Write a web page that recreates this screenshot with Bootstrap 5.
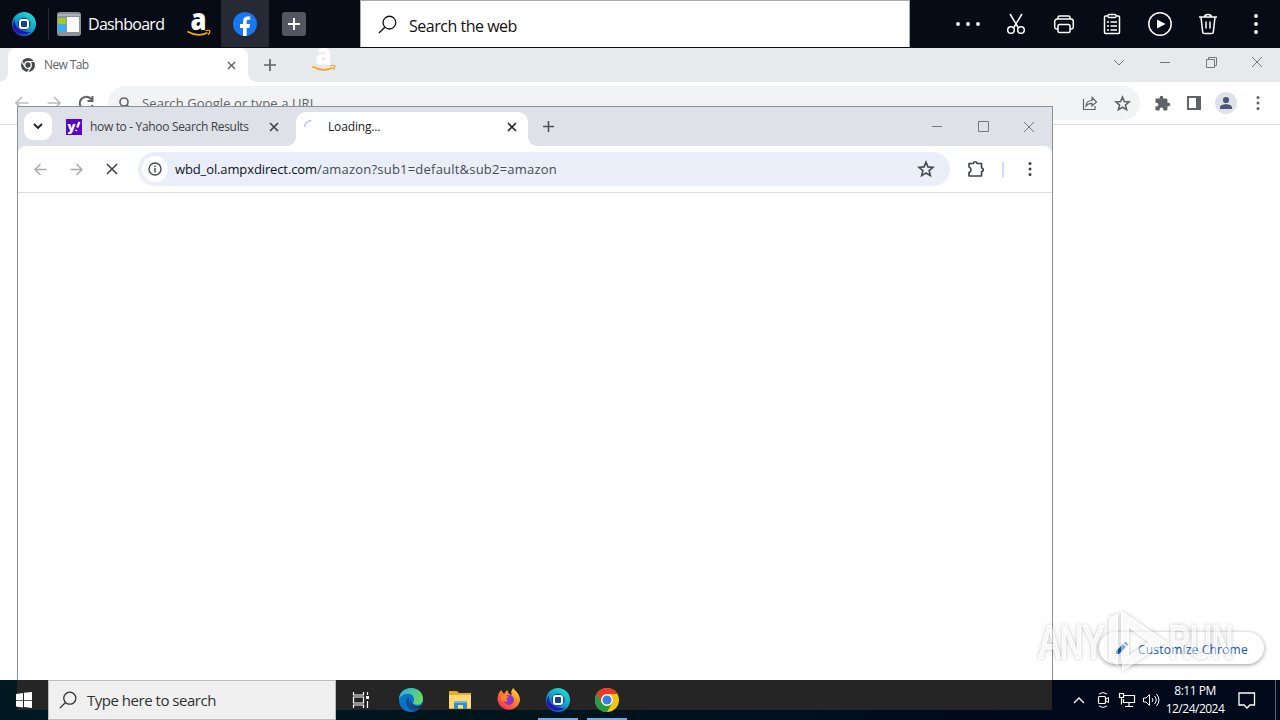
<!DOCTYPE html>
<html lang="en">
<head>
    <meta charset="UTF-8">
    <meta name="viewport" content="width=device-width, initial-scale=1.0">
    <title>Desktop</title>
    <link href="https://cdn.jsdelivr.net/npm/bootstrap@5.3.0/dist/css/bootstrap.min.css" rel="stylesheet">
    <style>
        body { width: 1280px; height: 720px; overflow: hidden; font-family: "Open Sans", "Noto Sans", sans-serif; font-size: 12px; line-height: 16px; color: #202124; background: #fff; }
        svg { display: block; flex: none; overflow: visible; }
        .ln { fill: none; stroke: currentColor; }
        .cell { display: flex; align-items: center; justify-content: center; flex: none; }

        /* launcher bar */
        .launcher { height: 48px; background: #070b16; color: #fff; }
        .launcher .cell { width: 48px; height: 47px; }
        .launcher .divider { width: 1px; height: 32px; background: #252a34; }
        .launcher .dash { width: 124px; padding-left: 8px; font-size: 16px; }
        .dash span { margin: 1px 0 0 7px; letter-spacing: -.7px; }
        .launcher .active-cell { background: #252a34; }
        .launcher .addcell { padding-left: 2px; }
        .websearch { width: 550px; height: 47px; margin: 0 34px 0 43px; padding-left: 17px; background: #fff; color: #111; border: 1px solid #aaa9b0; border-bottom: 0; font-size: 16px; }
        .websearch span { margin: 3px 0 0 12px; letter-spacing: -.48px; }

        /* back browser */
        .strip { height: 34px; background: #e7eaed; padding-left: 8px; color: #5f6368; }
        .back-tab { position: relative; width: 240px; height: 34px; background: #fff; border-radius: 8px 8px 0 0; padding: 0 8px 0 12px; }
        .back-tab span { margin-left: 8px; letter-spacing: -.6px; }
        .back-tools { height: 43px; border-bottom: 1px solid #dadce0; color: #5f6368; padding: 4px 6px 0; }
        .back-tools .cell { width: 32px; height: 34px; }
        .back-tools .puzzle { margin-left: 6px; }
        .back-omni { width: 1032px; height: 34px; margin-left: 6px; border-radius: 17px; background: #f1f3f4; padding-left: 10px; padding-right: 2px; font-size: 13px; }
        .back-omni span { margin-left: 10px; letter-spacing: .1px; }
        .wincell { width: 46px; height: 28px; color: #74777c; }

        /* front browser */
        .front { position: absolute; left: 17px; top: 106px; width: 1036px; height: 574px; background: linear-gradient(#dee1e8, #dee1e8) 0 0 / 100% 50px no-repeat #fff; border: 1px solid #8a8f98; border-bottom: 0; }
        .front-strip { height: 39px; }
        .tabmenu { width: 28px; height: 28px; margin: 5px 0 0 6px; border-radius: 9px; background: #fff; }
        .front-tab { height: 39px; color: #3c4043; }
        .idle-tab { width: 226px; margin-left: 4px; padding: 0 3px 0 10px; }
        .idle-tab span { margin-left: 8px; letter-spacing: -.33px; }
        .live-tab { position: relative; width: 232px; height: 34px; margin-top: 5px; padding: 0 11px 5px 7px; background: #fff; border-radius: 10px 10px 0 0; color: #202124; }
        .live-tab span { margin-left: 10px; letter-spacing: -.15px; }
        .foot { position: absolute; bottom: 0; width: 9px; height: 9px; }
        .foot-l { left: -9px; background: radial-gradient(circle at 0 0, transparent 8.5px, #fff 9px); }
        .foot-r { right: -9px; background: radial-gradient(circle at 100% 0, transparent 8.5px, #fff 9px); }
        .front-tools { height: 47px; border-radius: 8px 8px 0 0; background: #fff; border-bottom: 1px solid #dadce0; padding: 0 4px; color: #3c4043; }
        .front-page { height: 487px; background: #fff; }
        .front-tools .cell { width: 36px; height: 36px; }
        .front-omni { width: 812px; height: 34px; margin-left: 8px; border-radius: 17px; background: #e9eef9; padding: 0 6px 0 4px; font-size: 13px; color: #474b54; }
        .front-omni .info { width: 26px; height: 26px; border-radius: 50%; background: #fff; }
        .front-omni span { margin-left: 7px; letter-spacing: .21px; }
        .front-omni b { font-weight: 400; color: #111318; letter-spacing: -.12px; }

        /* over the pages */
        .ghost { position: absolute; left: 312px; top: 46px; }
        .customize { position: absolute; left: 1099px; top: 632px; width: 165px; height: 32px; border-radius: 16px; background: #fff; box-shadow: 0 1px 4px rgba(0,0,0,.4); color: #1558b3; padding-left: 15px; }
        .customize span { margin: 3px 0 0 8px; letter-spacing: .2px; }
        .watermark { position: absolute; left: 1031px; top: 601px; }

        /* taskbar */
        .taskbar { position: absolute; left: 0; top: 680px; width: 1280px; height: 40px; color: #fff; background: linear-gradient(#262525, #262525) 17px 0 / 1035px 30px no-repeat, linear-gradient(90deg, #001820, #00131d 55%, #000a1b 80%); }
        .typebox { width: 288px; height: 40px; background: #f0f0f0; border: 1px solid #bbb; color: #303030; padding-left: 10px; font-size: 15px; }
        .typebox span { margin-left: 10px; letter-spacing: -.48px; }
        .taskbar .cell { width: 49px; height: 40px; }
        .taskbar .running { background: linear-gradient(#76aae4, #76aae4) center bottom / 40px 2px no-repeat; }
        .taskbar .tray { width: 24px; }
        .clock { width: 64px; line-height: 18px; text-align: center; letter-spacing: -.5px; white-space: nowrap; }
        .peek { width: 1px; height: 40px; background: #59616c; margin: 0 4px 0 8px; }
    </style>
</head>
<body>
    <svg width="0" height="0" class="position-absolute">
        <defs>
            <linearGradient id="ringBlue" x1="0" y1="1" x2=".7" y2="0"><stop offset="0" stop-color="#1729cf"/><stop offset=".4" stop-color="#0888c4"/><stop offset="1" stop-color="#25d9d0"/></linearGradient>
            <linearGradient id="edgeTop" x1="0" x2="1" y2=".5"><stop offset="0" stop-color="#28a9df"/><stop offset="1" stop-color="#68d965"/></linearGradient>
            <linearGradient id="fire" x1="1" y1="0" x2=".2" y2="1"><stop offset="0" stop-color="#fff04b"/><stop offset=".45" stop-color="#ff8a27"/><stop offset="1" stop-color="#f52961"/></linearGradient>
            <symbol id="ring" viewBox="0 0 24 24"><circle cx="12" cy="12" r="12" fill="url(#ringBlue)"/><path d="M3 8c-1 8 7 13 16 12A12 12 0 0 1 1.500 17C0 13 1 10 3 8Z" fill="#2414b0"/><circle cx="12" cy="12" r="6.500" fill="#1a44a4"/><rect x="8" y="8" width="8" height="8" rx="2" fill="#1b4193" stroke="#fff" stroke-width="2"/></symbol>
            <symbol id="amazon" viewBox="0 0 24 26"><text x="3.500" y="19" font-family="Open Sans" font-weight="800" font-size="30" fill="#fff" textLength="16" lengthAdjust="spacingAndGlyphs">a</text><path d="M.5 20.500q10 6 20 1.200" fill="none" stroke="#f5a51d" stroke-width="1.800"/><path d="M18.500 19.700q4-.8 4.300 0q.2 1.800-1.600 4.200" fill="none" stroke="#f5a51d" stroke-width="1.300"/></symbol>
            <symbol id="close" viewBox="0 0 10 10"><path d="m1 1 8 8M9 1 1 9" class="ln" stroke-width="1.600"/></symbol>
            <symbol id="thinclose" viewBox="0 0 12 12"><path d="m1 1 10 10M11 1 1 11" class="ln"/></symbol>
            <symbol id="plus" viewBox="0 0 12 12"><path d="M6 0v12M0 6h12" class="ln" stroke-width="1.700"/></symbol>
            <symbol id="arrow" viewBox="0 0 14 14"><path d="M13.500 7H1M7 1 1 7l6 6" class="ln" stroke-width="1.600"/></symbol>
            <symbol id="star" viewBox="0 0 24 24"><path d="m12 3 2.600 6.200 6.700.6-5.100 4.400 1.600 6.600-5.800-3.500-5.800 3.500 1.600-6.600-5.100-4.400 6.700-.6Z" class="ln" stroke-width="2.200"/></symbol>
            <symbol id="dots" viewBox="0 0 4 16"><circle cx="2" cy="2.500" r="1.500" fill="currentColor"/><circle cx="2" cy="8" r="1.500" fill="currentColor"/><circle cx="2" cy="13.500" r="1.500" fill="currentColor"/></symbol>
            <symbol id="lens" viewBox="0 0 20 20"><circle cx="12" cy="8" r="6.700" class="ln" stroke-width="1.400"/><path d="m7.200 12.800-6.200 6.200" class="ln" stroke-width="1.400"/></symbol>
        </defs>
    </svg>

    <header class="launcher d-flex align-items-start">
        <div class="cell"><svg width="24" height="24"><use href="#ring"/></svg></div>
        <div class="divider mt-2"></div>
        <div class="cell dash justify-content-start">
            <svg width="24" height="24"><rect width="24" height="24" rx="3" fill="#8d9299"/><path d="M1 6h8v6H1z" fill="#a4c925"/><path d="M1 12h8v8H1z" fill="#39aeea"/><path d="M10 5h12v15H10z" fill="#fafafa"/><path d="M1 3h22" stroke="#aeb1b5" stroke-width="2"/></svg>
            <span>Dashboard</span>
        </div>
        <div class="cell ps-1"><svg width="24" height="26"><use href="#amazon"/></svg></div>
        <div class="cell active-cell"><svg width="24" height="24" viewBox="0 0 24 24"><circle cx="12" cy="12" r="12" fill="#1877f2"/><path d="M10 24v-8H7v-4h3V9.300C10 6 12 4.400 14.700 4.400l2.500.2v3.200h-1.600c-1.500 0-1.900.9-1.900 1.900V12H17l-.6 4h-2.700v8z" fill="#fff"/></svg></div>
        <div class="cell addcell"><svg width="24" height="24"><rect width="24" height="24" rx="3" fill="#53565e"/><path d="M12 6v12M6 12h12" stroke="#fff" stroke-width="2"/></svg></div>
        <div class="websearch d-flex align-items-center">
            <svg width="19" height="19"><use href="#lens"/></svg>
            <span>Search the web</span>
        </div>
        <div class="cell"><svg width="26" height="6"><circle cx="3" cy="3" r="1.900" fill="#fff"/><circle cx="13" cy="3" r="1.900" fill="#fff"/><circle cx="23" cy="3" r="1.900" fill="#fff"/></svg></div>
        <div class="cell"><svg width="24" height="24"><path d="m6 2 8.500 14M18 2 9.500 16" class="ln" stroke-width="1.500"/><circle cx="7" cy="18" r="3.300" class="ln" stroke-width="1.500"/><circle cx="17" cy="18" r="3.300" class="ln" stroke-width="1.500"/></svg></div>
        <div class="cell"><svg width="24" height="24"><path d="M6 17H4.500A2 2 0 0 1 2.700 15V9.500a2.500 2.500 0 0 1 2.500-2.500h13.600a2.500 2.500 0 0 1 2.500 2.500V15a2 2 0 0 1-1.800 2H18M6 7V5.500A1.500 1.500 0 0 1 7.500 4h9A1.500 1.500 0 0 1 18 5.500V7" class="ln" stroke-width="1.500"/><rect x="6" y="12.500" width="12" height="8" rx="1.500" class="ln" stroke-width="1.500"/></svg></div>
        <div class="cell"><svg width="24" height="24"><path d="M8 4H5.500A1 1 0 0 0 4.500 5v15.500a1 1 0 0 0 1 1h13a1 1 0 0 0 1-1V5a1 1 0 0 0-1-1H16" class="ln" stroke-width="1.500"/><rect x="8" y="2.500" width="8" height="3" rx="1" class="ln" stroke-width="1.300"/><path d="M7 10h2m1.500 0H17M7 14h2m1.500 0H17M7 18h2m1.500 0H17" class="ln" stroke-width="1.700"/></svg></div>
        <div class="cell"><svg width="24" height="24"><circle cx="12" cy="12" r="11.200" class="ln" stroke-width="1.500"/><path d="m9 7.500 8.500 4.500L9 16.500z" fill="#fff"/></svg></div>
        <div class="cell"><svg width="24" height="24"><path d="M3 5h18M8.500 5c.3-3.200 6.700-3.200 7 0M5 5l1.700 15.300a1.500 1.500 0 0 0 1.500 1.200h7.600a1.500 1.500 0 0 0 1.500-1.200L19 5M10 9.500v7M14 9.500v7" class="ln" stroke-width="1.500"/></svg></div>
        <div class="cell"><svg width="6" height="22"><circle cx="3" cy="3" r="1.900" fill="#fff"/><circle cx="3" cy="11" r="1.900" fill="#fff"/><circle cx="3" cy="19" r="1.900" fill="#fff"/></svg></div>
    </header>

    <section class="back-browser">
        <div class="strip d-flex">
            <div class="back-tab d-flex align-items-center">
                <svg width="16" height="16" viewBox="0 0 16 16"><circle cx="8" cy="8" r="7" fill="#46494d"/><circle cx="8" cy="8" r="3.300" fill="#46494d" stroke="#fff" stroke-width="1.300"/><path d="M8 4.500h7M5 9.700 1.500 4M11 9.700 7.500 15.500" stroke="#fff" stroke-width="1.200"/></svg>
                <span>New Tab</span>
                <svg class="ms-auto me-1" width="9" height="9"><use href="#close"/></svg>
                <i class="foot foot-r"></i><i class="foot foot-l"></i>
            </div>
            <div class="cell" style="width:44px"><svg width="12" height="12"><use href="#plus"/></svg></div>
            <div class="d-flex ms-auto">
                <div class="cell wincell"><svg width="12" height="7"><path d="m1 1 5 5 5-5" class="ln"/></svg></div>
                <div class="cell wincell"><svg width="10" height="1"><path d="M0 .5h10" class="ln"/></svg></div>
                <div class="cell wincell"><svg width="11" height="11"><path d="M.5 2.500h8v8h-8zM2.500 2.500v-2h8v8h-2" class="ln"/></svg></div>
                <div class="cell wincell"><svg width="12" height="12"><use href="#thinclose"/></svg></div>
            </div>
        </div>
        <div class="back-tools d-flex">
            <div class="cell"><svg width="14" height="14" style="color:#babcbe"><use href="#arrow"/></svg></div>
            <div class="cell"><svg width="14" height="14" style="color:#babcbe" transform="scale(-1 1)"><use href="#arrow"/></svg></div>
            <div class="cell"><svg width="16" height="16"><path d="M13.500 4.500A6.500 6.500 0 1 0 14.500 10M14.500 1v5h-5" class="ln" stroke-width="2"/></svg></div>
            <div class="back-omni d-flex align-items-center">
                <svg width="14" height="14"><circle cx="6" cy="6" r="4" class="ln" stroke-width="1.600"/><path d="m9 9 4 4" class="ln" stroke-width="1.600"/></svg>
                <span>Search Google or type a URL</span>
                <div class="cell ms-auto"><svg width="16" height="16"><path d="M1.500 4v10.500H13V11M4 11c.3-3.500 2.700-5.500 6-5.500V2.500L14.500 7 10 11V8.300C7.500 8.300 5.500 9 4 11Z" class="ln" stroke-width="1.200"/></svg></div>
                <div class="cell"><svg width="17" height="17"><use href="#star"/></svg></div>
            </div>
            <div class="cell puzzle"><svg width="17" height="17" viewBox="0 0 24 24"><path fill="currentColor" d="M20.500 11H19V7a2 2 0 0 0-2-2h-4V3.500a2.500 2.500 0 0 0-5 0V5H4a2 2 0 0 0-2 2v3.800h1.500a2.700 2.700 0 0 1 0 5.400H2V20a2 2 0 0 0 2 2h3.800v-1.500a2.700 2.700 0 0 1 5.400 0V22H17a2 2 0 0 0 2-2v-4h1.500a2.500 2.500 0 0 0 0-5z"/></svg></div>
            <div class="cell"><svg width="14" height="14"><path d="M1 1h12v12H1z" class="ln" stroke-width="2"/><path d="M9 1h5v12H9z" fill="currentColor"/></svg></div>
            <div class="cell"><svg width="22" height="22"><circle cx="11" cy="11" r="11" fill="#dfe1e8"/><circle cx="11" cy="8" r="3.100" fill="#4c5674"/><path d="M5 17v-1.500c0-4.500 12-4.500 12 0V17z" fill="#4c5674"/></svg></div>
            <div class="cell"><svg width="4" height="16"><use href="#dots"/></svg></div>
        </div>
    </section>

    <main class="front">
        <div class="front-strip d-flex">
            <div class="cell tabmenu"><svg width="10" height="7"><path d="m1 1 4 4 4-4" class="ln" stroke-width="1.900"/></svg></div>
            <div class="front-tab idle-tab d-flex align-items-center">
                <svg width="16" height="16"><rect width="16" height="16" fill="#5607c7"/><text x="1.500" y="12" font-family="Open Sans" font-size="13" font-weight="800" fill="#fff">y</text><path d="m13.500 3-2.300 5.500M10.400 11l-.4 1" stroke="#fff" stroke-width="2.200"/></svg>
                <span>how to - Yahoo Search Results</span>
                <svg class="ms-auto" width="10" height="10"><use href="#close"/></svg>
            </div>
            <div class="live-tab d-flex align-items-center ms-auto">
                <i class="foot foot-l"></i><i class="foot foot-r"></i>
                <svg width="15" height="15"><path d="M1.500 8a7 7 0 0 1 7-6.500" fill="none" stroke="#b8c8f5" stroke-width="1.700"/></svg>
                <span>Loading...</span>
                <svg class="ms-auto" width="10" height="10"><use href="#close"/></svg>
            </div>
            <div class="cell" style="width:40px;color:#4b5057"><svg width="11" height="11"><use href="#plus"/></svg></div>
            <div class="d-flex" style="margin-left:346px">
                <div class="cell wincell h-100"><svg width="10" height="1"><path d="M0 .5h10" class="ln"/></svg></div>
                <div class="cell wincell h-100"><svg width="11" height="11"><path d="M.5.5h10v10H.5z" class="ln"/></svg></div>
                <div class="cell wincell h-100"><svg width="12" height="12"><use href="#thinclose"/></svg></div>
            </div>
        </div>
        <div class="front-tools d-flex align-items-center">
            <div class="cell"><svg width="13" height="13" style="color:#aaa"><use href="#arrow"/></svg></div>
            <div class="cell"><svg width="13" height="13" style="color:#aaa" transform="scale(-1 1)"><use href="#arrow"/></svg></div>
            <div class="cell"><svg width="12" height="12"><path d="m1 1 10 10M11 1 1 11" class="ln" stroke-width="1.500"/></svg></div>
            <div class="front-omni d-flex align-items-center">
                <div class="cell info"><svg width="14" height="14"><circle cx="7" cy="7" r="6" class="ln" stroke-width="1.400"/><path d="M7 6v4.500M7 3.500V5" class="ln" stroke-width="1.500"/></svg></div>
                <span><b>wbd_ol.ampxdirect.com</b>/amazon?sub1=default&amp;sub2=amazon</span>
                <div class="cell ms-auto"><svg width="18" height="18"><use href="#star"/></svg></div>
            </div>
            <div class="cell ms-2"><svg width="18" height="18"><path d="M2 3.500h4.500c0-2.300 3.500-2.300 3.500 0h4.500V8c2.300 0 2.300 3.500 0 3.500V16H2v-3.500c2.700-1 2.700-4.300 0-5.500Z" class="ln" stroke-width="1.600" stroke-linejoin="round"/></svg></div>
            <div class="cell" style="width:18px"><svg width="2" height="15"><path d="M1 0v15" stroke="#c9dcfb" stroke-width="2"/></svg></div>
            <div class="cell"><svg width="4" height="16"><use href="#dots"/></svg></div>
        </div>
        <div class="front-page"></div>
    </main>

    <svg class="ghost" width="24" height="26"><use href="#amazon"/></svg>

    <div class="customize d-flex align-items-center">
        <svg width="16" height="16"><path d="M2 14v-3l7-7 3 3-7 7zM10 3l1.500-1.500 3 3L13 6z" fill="currentColor"/></svg>
        <span>Customize Chrome</span>
    </div>

    <footer class="taskbar d-flex align-items-center">
        <div class="cell" style="width:48px"><svg width="16" height="16"><path d="m0 2 7-1v7H0zM8 .8 16 0v8H8zM0 8.800h7v6.700l-7-1zM8 8.800h8V16l-8-1z" fill="#fff"/></svg></div>
        <div class="typebox d-flex align-items-center"><svg width="18" height="18"><use href="#lens"/></svg><span>Type here to search</span></div>
        <div class="cell"><svg width="16" height="16"><path d="M.5 0v3h10V0M.5 16v-3h10v3M.5 5h10v6H.5zM14.500 0v3M14.500 9v7" class="ln" stroke-width="1.200"/><path d="M13 4h3v3h-3z" fill="#fff"/></svg></div>
        <div class="cell" style="width:52px"><svg width="24" height="24"><circle cx="12" cy="12" r="12" fill="#0874c6"/><path d="M0 11C1-4 24-3 24 11c0 5-5 7-9 5-2-1 0-2 0-4C15 4 4 4 0 11Z" fill="url(#edgeTop)"/><path d="M10 9c-6 4-2 13 5 14 3 0 6-2 7-5-5 3-13 0-12-9Z" fill="#154b91"/><path d="M13 9.500c-3 3 0 8 4 9 3 0 6-1 7-3l.5 2.500-2 1c-5 2-12-1-11-7Z" fill="#262525"/></svg></div>
        <div class="cell" style="width:46px"><svg width="22" height="20"><path d="M0 1h8l2 2h12v16H0z" fill="#e9ac28"/><path d="M0 5h22v13H0z" fill="#ffda72"/><path d="M5 19v-8h13v8h-4v-4H9v4z" fill="#348ece"/><path d="M5 11h13v2H5z" fill="#67bae9"/></svg></div>
        <div class="cell" style="width:52px"><svg width="24" height="24"><path d="M2 5l2-3 3 4 3-4 2 4 3 1-1-3 2-4c2 3 7 5 7 13A11.500 11.500 0 0 1 .5 12C.5 9 1 7 2 5Z" fill="url(#fire)"/><circle cx="12" cy="12" r="5" fill="#8b35c9"/><path d="M3 9c4-3 6-1 9 0l-3 2 2 2c-3 2-7-1-8-4Z" fill="#ff8428"/></svg></div>
        <div class="cell running" style="width:46px"><svg width="24" height="24"><use href="#ring"/></svg></div>
        <div class="cell running" style="width:52px"><svg width="24" height="24" viewBox="0 0 24 24"><circle cx="12" cy="12" r="12" fill="#fbc116"/><path d="M1.600 6A12 12 0 0 1 22.400 6H12a6 6 0 0 0-5.200 9Z" fill="#e33b2e"/><path d="M1.600 6A12 12 0 0 0 12 24l5.200-9a6 6 0 0 1-10.400 0Z" fill="#229b4b"/><circle cx="12" cy="12" r="5.800" fill="#fff"/><circle cx="12" cy="12" r="4.500" fill="#397ee8"/></svg></div>
        <div class="d-flex align-items-center ms-auto">
            <div class="cell tray"><svg width="12" height="7"><path d="m1 6 5-5 5 5" class="ln" stroke-width="1.300"/></svg></div>
            <div class="cell tray"><svg width="12" height="16"><path d="M2 2q4-3 8 0M2 14q4 3 8 0" class="ln"/><rect x="1.500" y="4.500" width="7" height="7" rx="1" class="ln" stroke-width="1.200"/><path d="m9 7 2.500-1.500v5L9 9" class="ln"/></svg></div>
            <div class="cell tray"><svg width="16" height="14"><path d="M5 2.500h10.500v7H4.500V6M10 10v3M6 13.500h8M.5.5h4v4h-4zM2.500 4.500v7" class="ln" stroke-width="1.200"/></svg></div>
            <div class="cell tray"><svg width="17" height="14"><path d="M.5 5v4H3l3.500 3.500v-11L3 5zM9 5q2 2 0 4M11.500 3q3.500 4 0 8M13.500 1q5 6 0 12" class="ln"/></svg></div>
            <div class="clock">8:11 PM<br>12/24/2024</div>
            <div class="cell" style="width:40px"><svg width="18" height="18"><path d="M1 2h15.500v12H12l-3 3-3-3H1z" class="ln" stroke-width="1.300"/></svg></div>
            <div class="peek"></div>
        </div>
    </footer>

    <svg class="watermark" width="210" height="76" opacity=".5">
        <g fill="#e9e9ea" stroke="#fff" stroke-width="2" font-family="Liberation Sans" font-size="46" style="filter:drop-shadow(0 0 2px rgba(0,0,0,.45))">
            <text x="8" y="57" textLength="65" lengthAdjust="spacingAndGlyphs">ANY</text>
            <text x="138" y="57" textLength="64" lengthAdjust="spacingAndGlyphs">RUN</text>
            <path d="M79 17l7-3v49l-7-5zM91 11l43 30-42 28v-9l27-19-22-16v31l-6 4z" fill="#f4f4f5"/>
        </g>
    </svg>

    <script src="https://cdn.jsdelivr.net/npm/bootstrap@5.3.0/dist/js/bootstrap.bundle.min.js"></script>
</body>
</html>
